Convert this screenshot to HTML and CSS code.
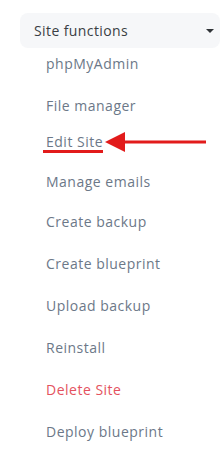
FILE: index.html
```html
<!DOCTYPE html>
<html lang="en">
  <head>
    <meta charset="UTF-8" />
    <meta name="viewport" content="width=device-width, initial-scale=1.0" />
    <title>Site functions</title>
    <link rel="stylesheet" href="styles.css">
  </head>
  <body>
    <div class="panel">
      <div class="dropdown-toggle">
        <span>Site functions</span>
        <span class="caret"></span>
      </div>

      <ul class="menu">
        <li class="menu-item">phpMyAdmin</li>
        <li class="menu-item short">File manager</li>
        <li class="menu-item mid"><span class="marked">Edit Site</span></li>
        <li class="menu-item mid">Manage emails</li>
        <li class="menu-item">Create backup</li>
        <li class="menu-item">Create blueprint</li>
        <li class="menu-item">Upload backup</li>
        <li class="menu-item">Reinstall</li>
        <li class="menu-item danger">Delete Site</li>
        <li class="menu-item">Deploy blueprint</li>
      </ul>

      <!-- annotation arrow pointing at Edit Site -->
      <svg class="arrow" width="110" height="24" viewBox="0 0 110 24">
        <polygon points="0,10 20,0 20,20" fill="#e21b1b" />
        <rect x="19" y="8.5" width="82" height="3" fill="#e21b1b" />
      </svg>
    </div>
  </body>
</html>
```

FILE: styles.css
```css
body {
  margin: 0;
  font-family: "Open Sans", Arial, sans-serif;
  background: #fff;
}

.panel {
  position: relative;
  margin: 13px 0 0 20px;
  width: 200px;
}

.dropdown-toggle {
  display: flex;
  justify-content: space-between;
  align-items: center;
  height: 35px;
  padding: 0 6px 0 14px;
  background-color: #f6f7f9;
  border-radius: 8px;
  font-size: 14px;
  letter-spacing: 0.4px;
  color: #3a3e44;
}

.caret {
  width: 0;
  height: 0;
  border-left: 4px solid transparent;
  border-right: 4px solid transparent;
  border-top: 4px solid #2f3337;
  margin-top: 1px;
}

.menu {
  list-style: none;
  margin: 0;
  padding: 6px 0 0 0;
  border-bottom: 1px solid #e4e4e4;
}

.menu-item {
  height: 42px;
  padding-left: 26px;
  font-size: 14px;
  line-height: 20px;
  letter-spacing: 0.5px;
  color: #6c7888;
}

.menu-item.short {
  height: 36px;
}

.menu-item.mid {
  height: 40px;
}

.menu-item:last-child {
  height: 37px;
}

.menu-item.danger {
  color: #e4525e;
}

.marked {
  display: inline-block;
  position: relative;
}

.marked::after {
  content: "";
  position: absolute;
  left: -3px;
  right: 0;
  top: 18px;
  height: 3px;
  background: #e21b1b;
}

.arrow {
  position: absolute;
  left: 85px;
  top: 119px;
}
```
